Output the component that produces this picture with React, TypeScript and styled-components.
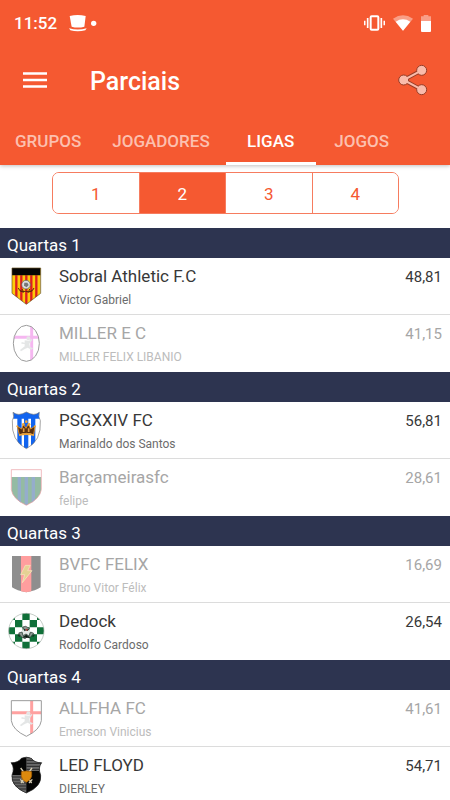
import React, { useState } from "react";
import styled, { createGlobalStyle } from "styled-components";

const ORANGE = "#f55931";
const NAVY = "#2d3450";

const GlobalStyle = createGlobalStyle`
  *, *::before, *::after { box-sizing: border-box; }
  body { margin: 0; background: #fff; font-family: Roboto, "Noto Sans", sans-serif; }
  button { font: inherit; border: 0; padding: 0; background: none; cursor: pointer; }
`;

const Screen = styled.div`
  display: flex;
  flex-direction: column;
  height: 100vh;
  background: #fff;
`;

const Header = styled.header`
  position: relative;
  flex: none;
  background: ${ORANGE};
  color: #fff;
  box-shadow: 0 1px 4px rgba(0, 0, 0, 0.25);
`;

const StatusBar = styled.div`
  display: flex;
  align-items: center;
  height: 46px;
  padding: 0 19px 0 14px;
  font-size: 17px;
  font-weight: 500;
`;

const Clock = styled.time`
  margin-right: auto;
  display: flex;
  align-items: center;
  gap: 12px;
`;

const StatusIcons = styled.div`
  display: flex;
  align-items: center;
  gap: 8px;
`;

const AppBar = styled.div`
  display: flex;
  align-items: center;
  height: 70px;
  padding: 0 20px 2px;
`;

const IconButton = styled.button`
  display: flex;
  color: #fff;
`;

const Title = styled.h1`
  flex: 1;
  margin: 0 0 0 40px;
  padding-top: 2px;
  font-size: 25px;
  font-weight: 500;
`;

const Tabs = styled.div`
  display: flex;
  gap: 1px;
  height: 49px;
`;

const Tab = styled.button<{ $active: boolean }>`
  min-width: 90px;
  padding: 3px 15px 0;
  border-bottom: 3px solid ${(p) => (p.$active ? "#fff" : "transparent")};
  color: ${(p) => (p.$active ? "#fff" : "#fcc0af")};
  font-size: 17px;
  font-weight: 500;
  white-space: nowrap;
`;

const Segments = styled.div`
  flex: none;
  display: flex;
  margin: 7px 51px 14px 52px;
  height: 42px;
  border: 1px solid #f67c5f;
  border-radius: 7px;
  overflow: hidden;
`;

const Segment = styled.button<{ $active: boolean }>`
  flex: 1;
  padding-top: 1px;
  color: ${(p) => (p.$active ? "#fff" : ORANGE)};
  background: ${(p) => (p.$active ? ORANGE : "#fff")};
  font-size: 17px;

  & + & {
    border-left: 1px solid #f67c5f;
  }
`;

const Matches = styled.main`
  flex: 1;
  min-height: 0;
  overflow-y: auto;
  scrollbar-width: none;
`;

const RoundTitle = styled.h2`
  height: 30px;
  margin: 0;
  padding: 1px 7px 0;
  background: ${NAVY};
  color: #fff;
  font-size: 17px;
  font-weight: 400;
  line-height: 32px;
`;

const TeamList = styled.ul`
  margin: 0;
  padding: 0;
  list-style: none;
`;

const TeamRow = styled.li<{ $out: boolean }>`
  display: flex;
  height: 57px;
  padding: 7px 8px 0;
  color: ${(p) => (p.$out ? "#a6a6a6" : "#383838")};

  &:not(:last-child) {
    border-bottom: 1px solid #dcdcdc;
  }
`;

const Crest = styled.svg<{ $out: boolean }>`
  flex: none;
  width: 36px;
  height: 36px;
  margin: 3px 15px 0 0;
  overflow: visible;
  opacity: ${(p) => (p.$out ? 0.45 : 1)};
`;

const TeamText = styled.div`
  flex: 1;
  min-width: 0;
`;

const TeamName = styled.div`
  font-size: 17px;
  line-height: 23px;
`;

const Owner = styled.div<{ $out: boolean }>`
  margin-top: 3px;
  color: ${(p) => (p.$out ? "#bcbcbc" : "#6c6c6c")};
  font-size: 12px;
  line-height: 18px;
`;

const Score = styled.div`
  font-size: 15px;
  line-height: 24px;
`;

const HatIcon = () => (
  <svg width="28" height="18" viewBox="0 0 84 54" fill="#fff" aria-hidden="true">
    <path d="M2 6Q26 0 50 6L46 38Q26 43 8 38Z" />
    <path d="M0 43Q26 50 53 43L49 49Q26 55 4 49Z" />
    <circle cx="74" cy="28" r="8" />
  </svg>
);

const VibrateIcon = () => (
  <svg width="21" height="16" viewBox="0 0 63 48" aria-hidden="true">
    <rect x="20" y="4" width="23" height="40" rx="3" fill="none" stroke="#fff" strokeWidth="6" />
    <path d="M2 17V31M11 9V39M52 9V39M61 17V31" stroke="#fff" strokeWidth="5" />
  </svg>
);

const WifiIcon = () => (
  <svg width="20" height="16" viewBox="0 0 60 48" aria-hidden="true">
    <path d="M0 11Q30 -9 60 11L30 47Z" fill="#f99e87" />
    <path d="M8 20Q30 6 52 20L30 47Z" fill="#fff" />
  </svg>
);

const BatteryIcon = () => (
  <svg width="10" height="17" viewBox="0 0 30 51" aria-hidden="true">
    <path d="M8 0H22V4H30V20H0V4H8Z" fill="#f99e87" />
    <path d="M0 18H30V48Q30 51 27 51H3Q0 51 0 48Z" fill="#fff" />
  </svg>
);

const MenuIcon = () => (
  <svg width="30" height="30" viewBox="0 0 30 30" aria-hidden="true">
    <path d="M3 8.5H27M3 15H27M3 21.5H27" stroke="#fff" strokeWidth="2.5" />
  </svg>
);

const ShareIcon = () => (
  <svg width="34" height="34" viewBox="0 0 102 102" aria-hidden="true">
    <path d="M77 22L23 51L77 80" fill="none" stroke="#963d27" strokeWidth="12" />
    <g fill="#fabbab" stroke="#963d27" strokeWidth="3">
      <circle cx="77" cy="22" r="15" />
      <circle cx="23" cy="51" r="15" />
      <circle cx="77" cy="80" r="15" />
    </g>
    <path d="M77 22L23 51L77 80" fill="none" stroke="#fabbab" strokeWidth="6" />
  </svg>
);

const pennant = "M12 0H98V76L55 109L12 76Z";
const curvedShield = "M10 2H100V62Q96 90 55 109Q14 90 10 62Z";
const splitShield = "M9 17Q30 18 40 4Q55 -3 70 4Q80 18 101 17Q89 32 98 54Q103 88 55 108Q8 88 12 54Q21 32 9 17Z";

const Runner = ({ color }: { color: string }) => (
  <g fill={color}>
    <circle cx="61" cy="40" r="6" />
    <path d="M50 46L63 47L72 41L73 45L64 56L66 66L76 70L70 74L59 68L49 73L39 79L36 75L50 64L50 57L40 56L41 51L50 53Z" />
  </g>
);

const crests: Record<string, React.ReactNode> = {
  sobral: (
    <>
      <clipPath id="sobral"><path d={pennant} /></clipPath>
      <g clipPath="url(#sobral)">
        <path d="M0 0H110V110H0Z" fill="#fdc90a" />
        <path d="M25 22V110M40 22V110M55 22V110M70 22V110M85 22V110" stroke="#dc1d22" strokeWidth="7" />
        <path d="M0 0H110V22H0Z" fill="#050505" />
      </g>
      <path d={pennant} fill="none" stroke="#645020" strokeWidth="2" />
      <circle cx="54" cy="50" r="13" fill="#ddd" stroke="#555" strokeWidth="2" />
      <path d="M49 44H58L62 51L56 58L48 53Z" fill="#777" />
      <path d="M31 60Q35 73 53 70Q72 75 78 60M35 68L47 73M59 73L73 68M42 63L46 70M65 63L62 71" fill="none" stroke="#59280c" strokeWidth="3" />
    </>
  ),
  miller: (
    <>
      <clipPath id="miller"><ellipse cx="55" cy="55" rx="39" ry="54" /></clipPath>
      <g clipPath="url(#miller)">
        <path d="M0 37H110M71 0V110" stroke="#e961df" strokeWidth="9" />
      </g>
      <ellipse cx="55" cy="55" rx="39" ry="54" fill="none" stroke="#222" strokeWidth="3" />
      <Runner color="#c5c9ca" />
    </>
  ),
  psg: (
    <>
      <clipPath id="psg"><path d="M15 1Q31 14 55 0Q79 14 94 1Q90 15 97 26Q101 87 55 110Q9 87 13 26Q20 15 15 1Z" /></clipPath>
      <g clipPath="url(#psg)">
        <path d="M0 0H110V110H0Z" fill="#fff" />
        <path d="M0 0H110V20H0ZM28 20H41V110H28ZM48 20H61V110H48ZM69 20H82V110H69Z" fill="#1264ef" />
      </g>
      <path d="M15 1Q31 14 55 0Q79 14 94 1Q90 15 97 26Q101 87 55 110Q9 87 13 26Q20 15 15 1Z" fill="none" stroke="#777" strokeWidth="2" />
      <path d="M34 68L28 43L41 51L46 37L54 49L61 36L68 51L81 42L77 68Q55 60 34 68Z" fill="#593010" stroke="#d98a26" strokeWidth="3" />
      <path d="M33 67Q55 60 78 67V72Q55 66 33 72Z" fill="#eba33b" />
      <g fill="#f0a738"><circle cx="28" cy="43" r="3" /><circle cx="46" cy="37" r="4" /><circle cx="55" cy="29" r="4" /><circle cx="63" cy="37" r="4" /><circle cx="81" cy="43" r="3" /></g>
      <path d="M47 49V60M62 49V60" stroke="#e09a41" strokeWidth="5" />
    </>
  ),
  barca: (
    <>
      <clipPath id="barca"><path d={curvedShield} /></clipPath>
      <g clipPath="url(#barca)">
        <path d="M0 0H110V110H0Z" fill="#fff" />
        <path d="M0 24H110V110H0Z" fill="#146b36" />
        <path d="M34 24V110M55 24V110M76 24V110" stroke="#164b90" strokeWidth="10" />
      </g>
      <path d={curvedShield} fill="none" stroke="#d02430" strokeWidth="2" />
    </>
  ),
  bvfc: (
    <>
      <path d="M12 0H98V94Q84 104 55 109Q26 104 12 94Z" fill="#070707" />
      <path d="M39 0H70V106L55 109L39 106Z" fill="#ff2929" />
      <path d="M52 28H67L59 44H72L43 80L50 56H38Z" fill="#c79b14" stroke="#eed37a" strokeWidth="2" />
    </>
  ),
  dedock: (
    <>
      <clipPath id="dedock"><circle cx="55" cy="54" r="53" /></clipPath>
      <g clipPath="url(#dedock)">
        <path d="M0 0H110V110H0Z" fill="#fff" />
        <path d="M43 0H65V21H43ZM21 21H43V43H21ZM65 21H87V43H65ZM0 43H21V64H0ZM43 43H65V64H43ZM87 43H110V64H87ZM21 64H43V86H21ZM65 64H87V86H65ZM0 0H21V21H0ZM87 0H110V21H87ZM43 86H65V110H43ZM0 86H21V110H0ZM87 86H110V110H87Z" fill="#107039" />
      </g>
      <circle cx="55" cy="54" r="53" fill="none" stroke="#a6b2a9" strokeWidth="2" />
      <ellipse cx="54" cy="55" rx="12" ry="13" fill="#e5e9e6" />
      <path d="M44 42L53 40L64 46L59 52L48 50ZM32 60L42 57L45 68L54 63L63 69L68 57L77 61L67 73L58 71L51 77L39 71Z" fill="#8d9893" stroke="#26352c" strokeWidth="2" />
      <path d="M48 49L52 53M61 48L58 53M30 65L35 71M79 65L74 71M46 73L55 67L65 75" stroke="#172d20" strokeWidth="4" />
      <circle cx="56" cy="50" r="3" fill="#bd3634" />
    </>
  ),
  allfha: (
    <>
      <clipPath id="allfha"><path d={curvedShield} /></clipPath>
      <g clipPath="url(#allfha)">
        <path d="M0 38H110M71 0V110" stroke="#ff302f" strokeWidth="9" />
      </g>
      <path d={curvedShield} fill="none" stroke="#222" strokeWidth="3" />
      <Runner color="#c5c9ca" />
    </>
  ),
  led: (
    <>
      <clipPath id="led"><path d={splitShield} /></clipPath>
      <g clipPath="url(#led)">
        <path d="M0 0H110V110H0Z" fill="#050505" />
        <path d="M55 0H110V42H55ZM0 54H55V110H0Z" fill="#686868" />
        <path d="M55 10H110M55 19H110M55 28H110M55 37H110M0 60H55M0 69H55M0 78H55M0 87H55M0 96H55" stroke="#292929" strokeWidth="3" />
      </g>
      <path d={splitShield} fill="none" stroke="#222" strokeWidth="2" />
      <path d="M38 33L71 78M72 33L39 78M37 67L47 78M73 67L63 78" stroke="#d8d0b7" strokeWidth="4" />
      <path d="M40 44Q55 40 71 44V57Q69 69 55 76Q41 69 40 57Z" fill="#dc890e" stroke="#a45e05" strokeWidth="2" />
    </>
  ),
};

interface Team {
  crest: string;
  name: string;
  owner: string;
  score: string;
  out: boolean;
}

const rounds: { title: string; teams: Team[] }[] = [
  {
    title: "Quartas 1",
    teams: [
      { crest: "sobral", name: "Sobral Athletic F.C", owner: "Victor Gabriel", score: "48,81", out: false },
      { crest: "miller", name: "MILLER E C", owner: "MILLER FELIX LIBANIO", score: "41,15", out: true },
    ],
  },
  {
    title: "Quartas 2",
    teams: [
      { crest: "psg", name: "PSGXXIV FC", owner: "Marinaldo dos Santos", score: "56,81", out: false },
      { crest: "barca", name: "Barçameirasfc", owner: "felipe", score: "28,61", out: true },
    ],
  },
  {
    title: "Quartas 3",
    teams: [
      { crest: "bvfc", name: "BVFC FELIX", owner: "Bruno Vitor Félix", score: "16,69", out: true },
      { crest: "dedock", name: "Dedock", owner: "Rodolfo Cardoso", score: "26,54", out: false },
    ],
  },
  {
    title: "Quartas 4",
    teams: [
      { crest: "allfha", name: "ALLFHA FC", owner: "Emerson Vinicius", score: "41,61", out: true },
      { crest: "led", name: "LED FLOYD", owner: "DIERLEY", score: "54,71", out: false },
    ],
  },
];

const tabNames = ["GRUPOS", "JOGADORES", "LIGAS", "JOGOS"];
const segmentNames = ["1", "2", "3", "4"];

export default function App() {
  const [tab, setTab] = useState("LIGAS");
  const [segment, setSegment] = useState("2");

  return (
    <Screen>
      <GlobalStyle />
      <Header>
        <StatusBar>
          <Clock>
            11:52
            <HatIcon />
          </Clock>
          <StatusIcons>
            <VibrateIcon />
            <WifiIcon />
            <BatteryIcon />
          </StatusIcons>
        </StatusBar>
        <AppBar>
          <IconButton aria-label="Menu"><MenuIcon /></IconButton>
          <Title>Parciais</Title>
          <IconButton aria-label="Compartilhar"><ShareIcon /></IconButton>
        </AppBar>
        <Tabs role="tablist">
          {tabNames.map((name) => (
            <Tab key={name} role="tab" aria-selected={tab === name} $active={tab === name} onClick={() => setTab(name)}>
              {name}
            </Tab>
          ))}
        </Tabs>
      </Header>
      <Segments>
        {segmentNames.map((name) => (
          <Segment key={name} aria-pressed={segment === name} $active={segment === name} onClick={() => setSegment(name)}>
            {name}
          </Segment>
        ))}
      </Segments>
      <Matches>
        {rounds.map((round) => (
          <section key={round.title}>
            <RoundTitle>{round.title}</RoundTitle>
            <TeamList>
              {round.teams.map((team) => (
                <TeamRow key={team.name} $out={team.out}>
                  <Crest viewBox="0 0 108 108" $out={team.out} aria-hidden="true">
                    {crests[team.crest]}
                  </Crest>
                  <TeamText>
                    <TeamName>{team.name}</TeamName>
                    <Owner $out={team.out}>{team.owner}</Owner>
                  </TeamText>
                  <Score>{team.score}</Score>
                </TeamRow>
              ))}
            </TeamList>
          </section>
        ))}
      </Matches>
    </Screen>
  );
}
